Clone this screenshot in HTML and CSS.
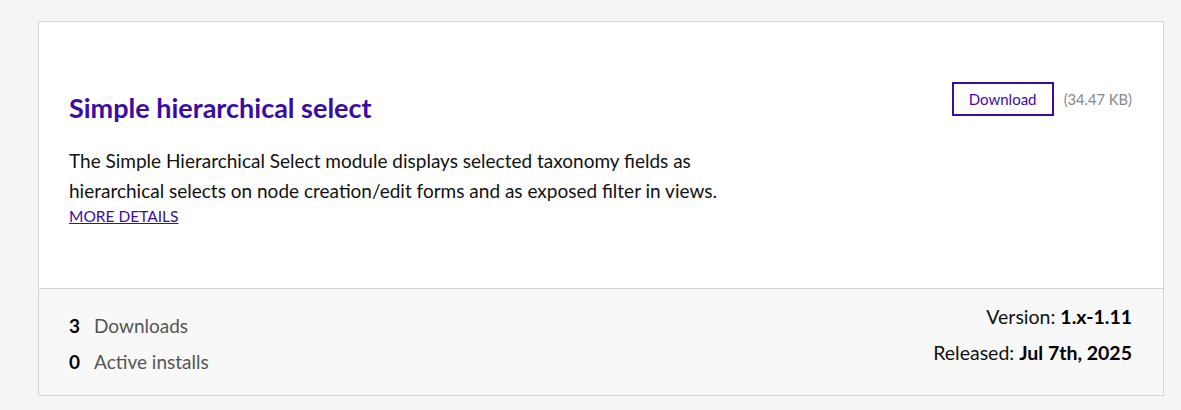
FILE: index.html
```html
<!DOCTYPE html>
<html lang="en">
<head>
<meta charset="utf-8">
<title>Simple hierarchical select</title>
<link rel="stylesheet" href="styles.css">
</head>
<body>
<div class="page">
  <article class="card">
    <div class="card-main">
      <div class="card-head">
        <h2 class="title">Simple hierarchical select</h2>
        <div class="dl">
          <a class="btn" href="#">Download</a>
          <span class="size">(34.47 KB)</span>
        </div>
      </div>
      <p class="desc">The Simple Hierarchical Select module displays selected taxonomy fields as hierarchical selects on node creation/edit forms and as exposed filter in views.</p>
      <a class="more" href="#">MORE DETAILS</a>
    </div>
    <div class="card-foot">
      <ul class="stats">
        <li><b>3</b><span>Downloads</span></li>
        <li><b>0</b><span>Active installs</span></li>
      </ul>
      <div class="meta">
        <div>Version: <b>1.x-1.11</b></div>
        <div>Released: <b>Jul 7th, 2025</b></div>
      </div>
    </div>
  </article>
</div>
</body>
</html>
```

FILE: styles.css
```css
* { box-sizing: border-box; }
html, body { margin: 0; padding: 0; }
body {
  background: #f5f5f5;
  font-family: "Lato", "Liberation Sans", sans-serif;
  color: #111;
}
.page {
  padding: 21px 17px 14px 38px;
}
.card {
  border: 1px solid #d4d4d4;
  background: #fff;
}
.card-main {
  padding: 60px 31px 62px 30px;
}
.card-head {
  display: flex;
  justify-content: space-between;
  align-items: flex-start;
}
.title {
  margin: 10px 0 0;
  font-size: 27px;
  line-height: 32px;
  font-weight: 700;
  color: #3b0ca3;
}
.dl {
  display: flex;
  align-items: center;
  gap: 10px;
}
.btn {
  display: inline-block;
  border: 2px solid #3b0ca3;
  color: #3b0ca3;
  text-decoration: none;
  font-size: 15px;
  height: 34px;
  line-height: 30px;
  width: 102px;
  text-align: center;
}
.size {
  color: #888;
  font-size: 14.7px;
}
.desc {
  margin: 22px 0 0;
  font-size: 19px;
  line-height: 30px;
  max-width: 690px;
}
.more {
  display: inline-block;
  color: #3b0ca3;
  font-size: 15.5px;
  line-height: 20px;
  text-decoration: underline;
}
.card-foot {
  border-top: 1px solid #d4d4d4;
  background: #f8f8f8;
  padding: 9px 31px 15px 30px;
  display: flex;
  justify-content: space-between;
  align-items: flex-start;
}
.stats {
  list-style: none;
  margin: 10px 0 0;
  padding: 0;
}
.stats li {
  font-size: 19px;
  line-height: 36px;
  display: flex;
  gap: 14px;
}
.stats b { color: #000; min-width: 11px; }
.stats span { color: #555; }
.meta {
  margin-top: 1px;
  text-align: right;
  font-size: 19.5px;
  line-height: 36px;
  color: #111;
}
.meta b { color: #000; }
```
